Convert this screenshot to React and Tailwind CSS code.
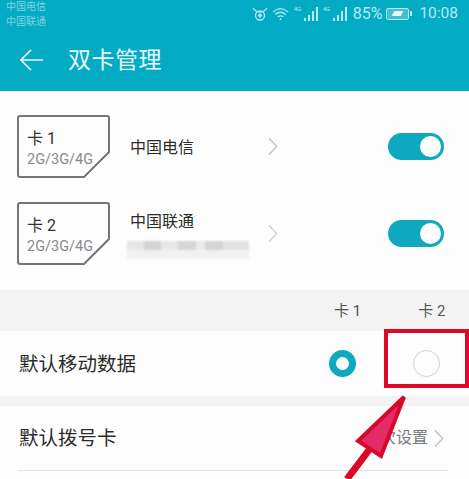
import React from "react";

const CJK = "font-['Roboto','Noto_Sans_CJK_SC',sans-serif]";

const Chevron = ({ className }) => (
  <svg viewBox="0 0 11 20" className={className} fill="none" stroke="#c4c4c4" strokeWidth="1.6">
    <path d="M1 1l8.5 9L1 19" />
  </svg>
);

const SimIcon = ({ label }) => (
  <div className="relative w-[93px] h-[63px] shrink-0">
    <svg viewBox="0 0 93 63" className="absolute inset-0 w-full h-full" fill="none" stroke="#757575" strokeWidth="2">
      <path d="M3 1h87a2 2 0 0 1 2 2v34L67 62H3a2 2 0 0 1-2-2V3a2 2 0 0 1 2-2z" />
    </svg>
    <div className="relative pl-[10px] pt-[12px]">
      <div className="text-[16px] leading-[23px] text-[#333]">{label}</div>
      <div className="text-[14.5px] leading-[20px] text-[#8a8a8a] whitespace-nowrap">2G/3G/4G</div>
    </div>
  </div>
);

const Toggle = () => (
  <div className="w-[56px] h-[27px] rounded-full bg-[#0fa8bf] flex items-center justify-end pr-[3px]">
    <div className="w-[21px] h-[21px] rounded-full bg-white" />
  </div>
);

const SimRow = ({ label, name, blurred }) => (
  <div className="h-[87px] flex items-center pl-[17px] pr-[25px]">
    <SimIcon label={label} />
    <div className="ml-[20px] w-[138px] shrink-0 pt-[3px]">
      <div className="text-[16px] leading-[22px] text-[#2b2b2b]">{name}</div>
      {blurred && (
        <div className="mt-[8px] -ml-[3px] w-[122px] h-[18px] flex flex-col blur-[1px]">
          <div className="h-[9px] flex">
            <div className="w-[17px] bg-[#e6e6e6]" />
            <div className="w-[17px] bg-[#d2d2d2]" />
            <div className="w-[17px] bg-[#e8e8e8]" />
            <div className="w-[18px] bg-[#d6d6d6]" />
            <div className="w-[9px] bg-[#eaeaea]" />
            <div className="w-[18px] bg-[#d4d4d4]" />
            <div className="w-[26px] bg-[#e2e2e2]" />
          </div>
          <div className="h-[9px] bg-[#f1f1f1]" />
        </div>
      )}
    </div>
    <Chevron className={`w-[10px] h-[19px] shrink-0 ${blurred ? "opacity-70" : ""}`} />
    <div className="ml-auto">
      <Toggle />
    </div>
  </div>
);

const Signal = ({ className }) => (
  <div className={`relative w-[24px] h-[15px] ${className}`}>
    <span className="absolute left-0 top-0 text-[6px] leading-none">4G</span>
    <div className="absolute right-0 bottom-0 flex items-end gap-[2px]">
      <div className="w-[2px] h-[3px] bg-current" />
      <div className="w-[2px] h-[6px] bg-current" />
      <div className="w-[2px] h-[10px] bg-current" />
      <div className="w-[2px] h-[14px] bg-current" />
    </div>
  </div>
);

const StatusIcons = () => (
  <div className="flex items-center text-[#b9e9f0]">
    <svg viewBox="0 0 16 14" className="w-[16px] h-[14px]" fill="none" stroke="currentColor" strokeWidth="1.3">
      <path d="M1 1c2 3 4 4 7 4s5-1 7-4" />
      <circle cx="8" cy="8.500" r="4.500" />
      <circle cx="8" cy="8.500" r="1.300" fill="currentColor" />
    </svg>
    <svg viewBox="0 0 18 14" className="w-[17px] h-[14px] ml-[4px]" fill="none" stroke="currentColor" strokeWidth="1.3">
      <path d="M1 5c5-4.500 11-4.500 16 0M3.500 7.500c3.500-3 7.500-3 11 0M6 10c2-1.500 4-1.500 6 0" />
      <circle cx="9" cy="12.500" r="1" fill="currentColor" stroke="none" />
    </svg>
    <Signal className="ml-[5px]" />
    <Signal className="ml-[5px]" />
    <span className="ml-[6px] text-[16px] leading-none">85%</span>
    <div className="ml-[4px] w-[23px] h-[12px] rounded-[2px] border border-current bg-white/25 flex items-center justify-center">
      <div className="w-[9px] h-[5px] bg-[#e6f8fa] -skew-x-[25deg]" />
    </div>
    <div className="w-[2px] h-[5px] ml-[1px] bg-current" />
    <span className="ml-[7px] text-[15.500px] leading-none">10:08</span>
  </div>
);

export default function App() {
  return (
    <div className={`relative w-[469px] h-[479px] overflow-hidden bg-[#fdfdfd] ${CJK}`}>
      <header className="h-[91px] bg-[#03abc4]">
        <div className="h-[30px] flex items-center justify-between pl-[6px] pr-[11px] pb-[3px]">
          <div className="pt-[1px] text-[10px] leading-[15px] text-[#7fd3e0]">
            <div>中国电信</div>
            <div>中国联通</div>
          </div>
          <StatusIcons />
        </div>
        <div className="h-[61px] flex items-center pl-[19px] pb-[1px] text-[#e6f8fa]">
          <svg viewBox="0 0 26 24" className="w-[25px] h-[24px]" fill="none" stroke="currentColor" strokeWidth="1.700">
            <path d="M25 12H2M12.500 1.500L2 12l10.500 10.500" />
          </svg>
          <h1 className="ml-[24px] text-[23px] leading-none font-normal tracking-[0.5px]">双卡管理</h1>
        </div>
      </header>

      <div className="pt-[12px]">
        <SimRow label="卡 1" name="中国电信" />
        <SimRow label="卡 2" name="中国联通" blurred />
      </div>

      <div className="mt-[13px] h-[41px] bg-[#f3f3f3] flex items-center text-[15px] text-[#555]">
        <span className="ml-[334px] pt-[2px]">卡 1</span>
        <span className="ml-[57px] pt-[2px]">卡 2</span>
      </div>

      <div className="h-[65px] flex items-center pl-[19px]">
        <span className="pt-[3px] text-[19.500px] text-[#2b2b2b]">默认移动数据</span>
        <div className="ml-auto mr-[57px] w-[27px] h-[27px] rounded-full border-[7px] border-[#0fa8bf]" />
        <div className="mr-[29px] w-[27px] h-[27px] rounded-full border border-[#cfcfcf]" />
      </div>

      <div className="h-[10px] bg-[#f3f3f3]" />

      <div className="h-[64px] flex items-center pl-[19px] pr-[25px]">
        <span className="pt-[2px] text-[19.500px] text-[#2b2b2b]">默认拨号卡</span>
        <span className="ml-auto text-[16px] text-[#7a7a7a]">每次设置</span>
        <Chevron className="ml-[6px] w-[10px] h-[19px]" />
      </div>
      <div className="ml-[18px] mr-[21px] h-px bg-[#e4e4e4]" />

      {/* red annotation box */}
      <div className="absolute left-[384px] top-[329px] w-[85px] h-[59px] border-[4px] border-[#dc0a28]" />

      {/* red annotation arrow */}
      <svg viewBox="0 0 469 479" className="absolute inset-0 w-full h-full pointer-events-none">
        <path d="M347 479L369 450" stroke="#d9082a" strokeWidth="7" fill="none" />
        <path d="M404 397L358 441L381 456Z" fill="#e42c68" stroke="#d9082a" strokeWidth="4" />
      </svg>
    </div>
  );
}
